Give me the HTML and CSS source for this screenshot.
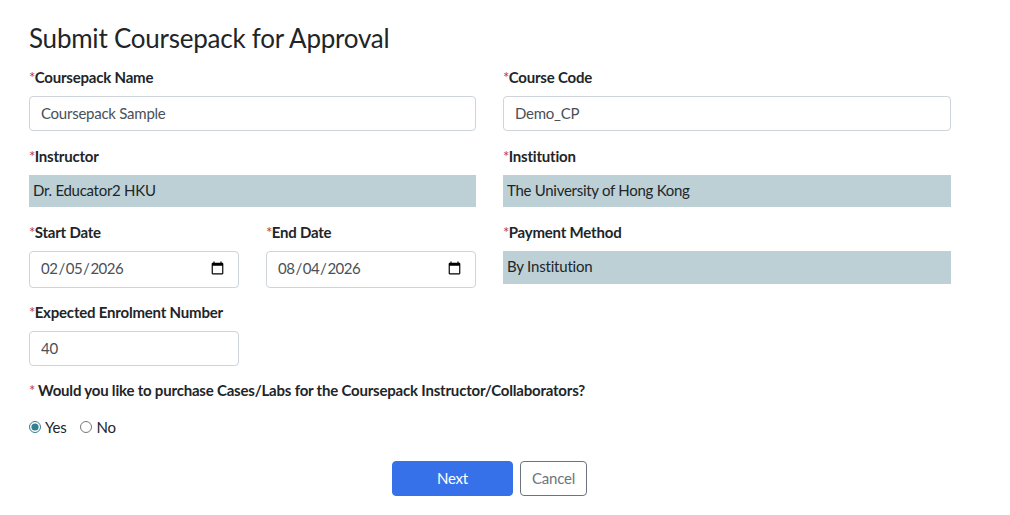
FILE: index.html
```html
<!DOCTYPE html>
<html lang="en">
<head>
    <meta charset="UTF-8">
    <meta name="viewport" content="width=device-width, initial-scale=1.0">
    <title>Submit Coursepack for Approval</title>
    <link rel="stylesheet" href="styles.css">
</head>
<body>
    <form class="form">
        <h1 class="title">Submit Coursepack for Approval</h1>

        <div class="row row-name">
            <div class="field">
                <label class="label"><span class="req">*</span>Coursepack Name</label>
                <input class="input" type="text" value="Coursepack Sample">
            </div>
            <div class="field">
                <label class="label"><span class="req">*</span>Course Code</label>
                <input class="input" type="text" value="Demo_CP">
            </div>
        </div>

        <div class="row row-locked">
            <div class="field">
                <label class="label"><span class="req">*</span>Instructor</label>
                <div class="locked">Dr. Educator2 HKU</div>
            </div>
            <div class="field">
                <label class="label"><span class="req">*</span>Institution</label>
                <div class="locked">The University of Hong Kong</div>
            </div>
        </div>

        <div class="row row-dates">
            <div class="dates">
                <div class="field">
                    <label class="label"><span class="req">*</span>Start Date</label>
                    <input class="input input-date" type="date" value="2026-02-05">
                </div>
                <div class="field">
                    <label class="label"><span class="req">*</span>End Date</label>
                    <input class="input input-date" type="date" value="2026-08-04">
                </div>
            </div>
            <div class="field">
                <label class="label"><span class="req">*</span>Payment Method</label>
                <div class="locked locked-short">By Institution</div>
            </div>
        </div>

        <div class="row row-enrol">
            <div class="dates">
                <div class="field">
                    <label class="label"><span class="req">*</span>Expected Enrolment Number</label>
                    <input class="input" type="text" value="40">
                </div>
            </div>
        </div>

        <p class="question"><span class="req">*</span> Would you like to purchase Cases/Labs for the Coursepack Instructor/Collaborators?</p>

        <div class="radios">
            <label class="radio"><input type="radio" name="purchase" checked>Yes</label>
            <label class="radio radio-no"><input type="radio" name="purchase">No</label>
        </div>

        <div class="actions">
            <button class="btn btn-next" type="button">Next</button>
            <button class="btn btn-cancel" type="button">Cancel</button>
        </div>
    </form>
</body>
</html>
```

FILE: styles.css
```css
* {
    box-sizing: border-box;
}

body {
    margin: 0;
    background: #fff;
    font-family: Lato, "Open Sans", sans-serif;
    font-size: 15px;
    letter-spacing: -0.2px;
    color: #212529;
}

.form {
    width: 922px;
    margin-left: 29px;
    padding-top: 22px;
}

.title {
    margin: 0;
    font-size: 26px;
    font-weight: 400;
    line-height: 32px;
    letter-spacing: -0.23px;
}

.row {
    display: grid;
    grid-template-columns: 447px 448px;
    column-gap: 27px;
}

.row-name {
    margin-top: 13px;
}

.row-locked {
    margin-top: 15px;
}

.row-dates {
    margin-top: 15px;
}

.row-enrol {
    margin-top: 14px;
}

.dates {
    display: grid;
    grid-template-columns: 210px 210px;
    column-gap: 27px;
}

.field {
    display: flex;
    flex-direction: column;
}

.label {
    display: block;
    height: 20px;
    margin-bottom: 9px;
    font-weight: 700;
    font-size: 15px;
    line-height: 20px;
    white-space: nowrap;
}

.req {
    margin-right: -0.5px;
    color: #c0392b;
    font-weight: 400;
}

.input {
    display: block;
    width: 100%;
    height: 35px;
    padding: 0 11px 2px;
    border: 1px solid #ced4da;
    border-radius: 4px;
    background: #fff;
    font-family: inherit;
    font-size: 15px;
    letter-spacing: -0.25px;
    color: #495057;
}

.input-date {
    height: 37px;
    padding: 0 11px 3px 10px;
    letter-spacing: -0.5px;
}

.locked {
    height: 32px;
    padding-left: 4px;
    background: #bcd0d5;
    font-size: 15px;
    letter-spacing: -0.28px;
    line-height: 31px;
    color: #212529;
}

.locked-short {
    height: 33px;
    letter-spacing: -0.2px;
}

.question {
    margin: 14px 0 0;
    font-weight: 700;
    font-size: 15px;
    line-height: 20px;
}

.radios {
    display: flex;
    gap: 13px;
    margin-top: 17px;
    line-height: 20px;
}

.radio {
    display: flex;
    align-items: center;
    gap: 4px;
}

.radio-no {
    gap: 5px;
}

.radio input {
    width: 12px;
    height: 12px;
    margin: 0;
    accent-color: #337f92;
}

.actions {
    display: flex;
    gap: 7px;
    margin-top: 24px;
    padding-left: 363px;
}

.btn {
    height: 35px;
    padding: 0 0 2px;
    border-radius: 4px;
    font-family: inherit;
    font-size: 15px;
    letter-spacing: -0.2px;
    cursor: pointer;
}

.btn-next {
    width: 121px;
    border: 1px solid #3771ea;
    background: #3771ea;
    color: #fff;
}

.btn-cancel {
    width: 67px;
    border: 1px solid #6c757d;
    background: #fff;
    color: #6c757d;
}
```
